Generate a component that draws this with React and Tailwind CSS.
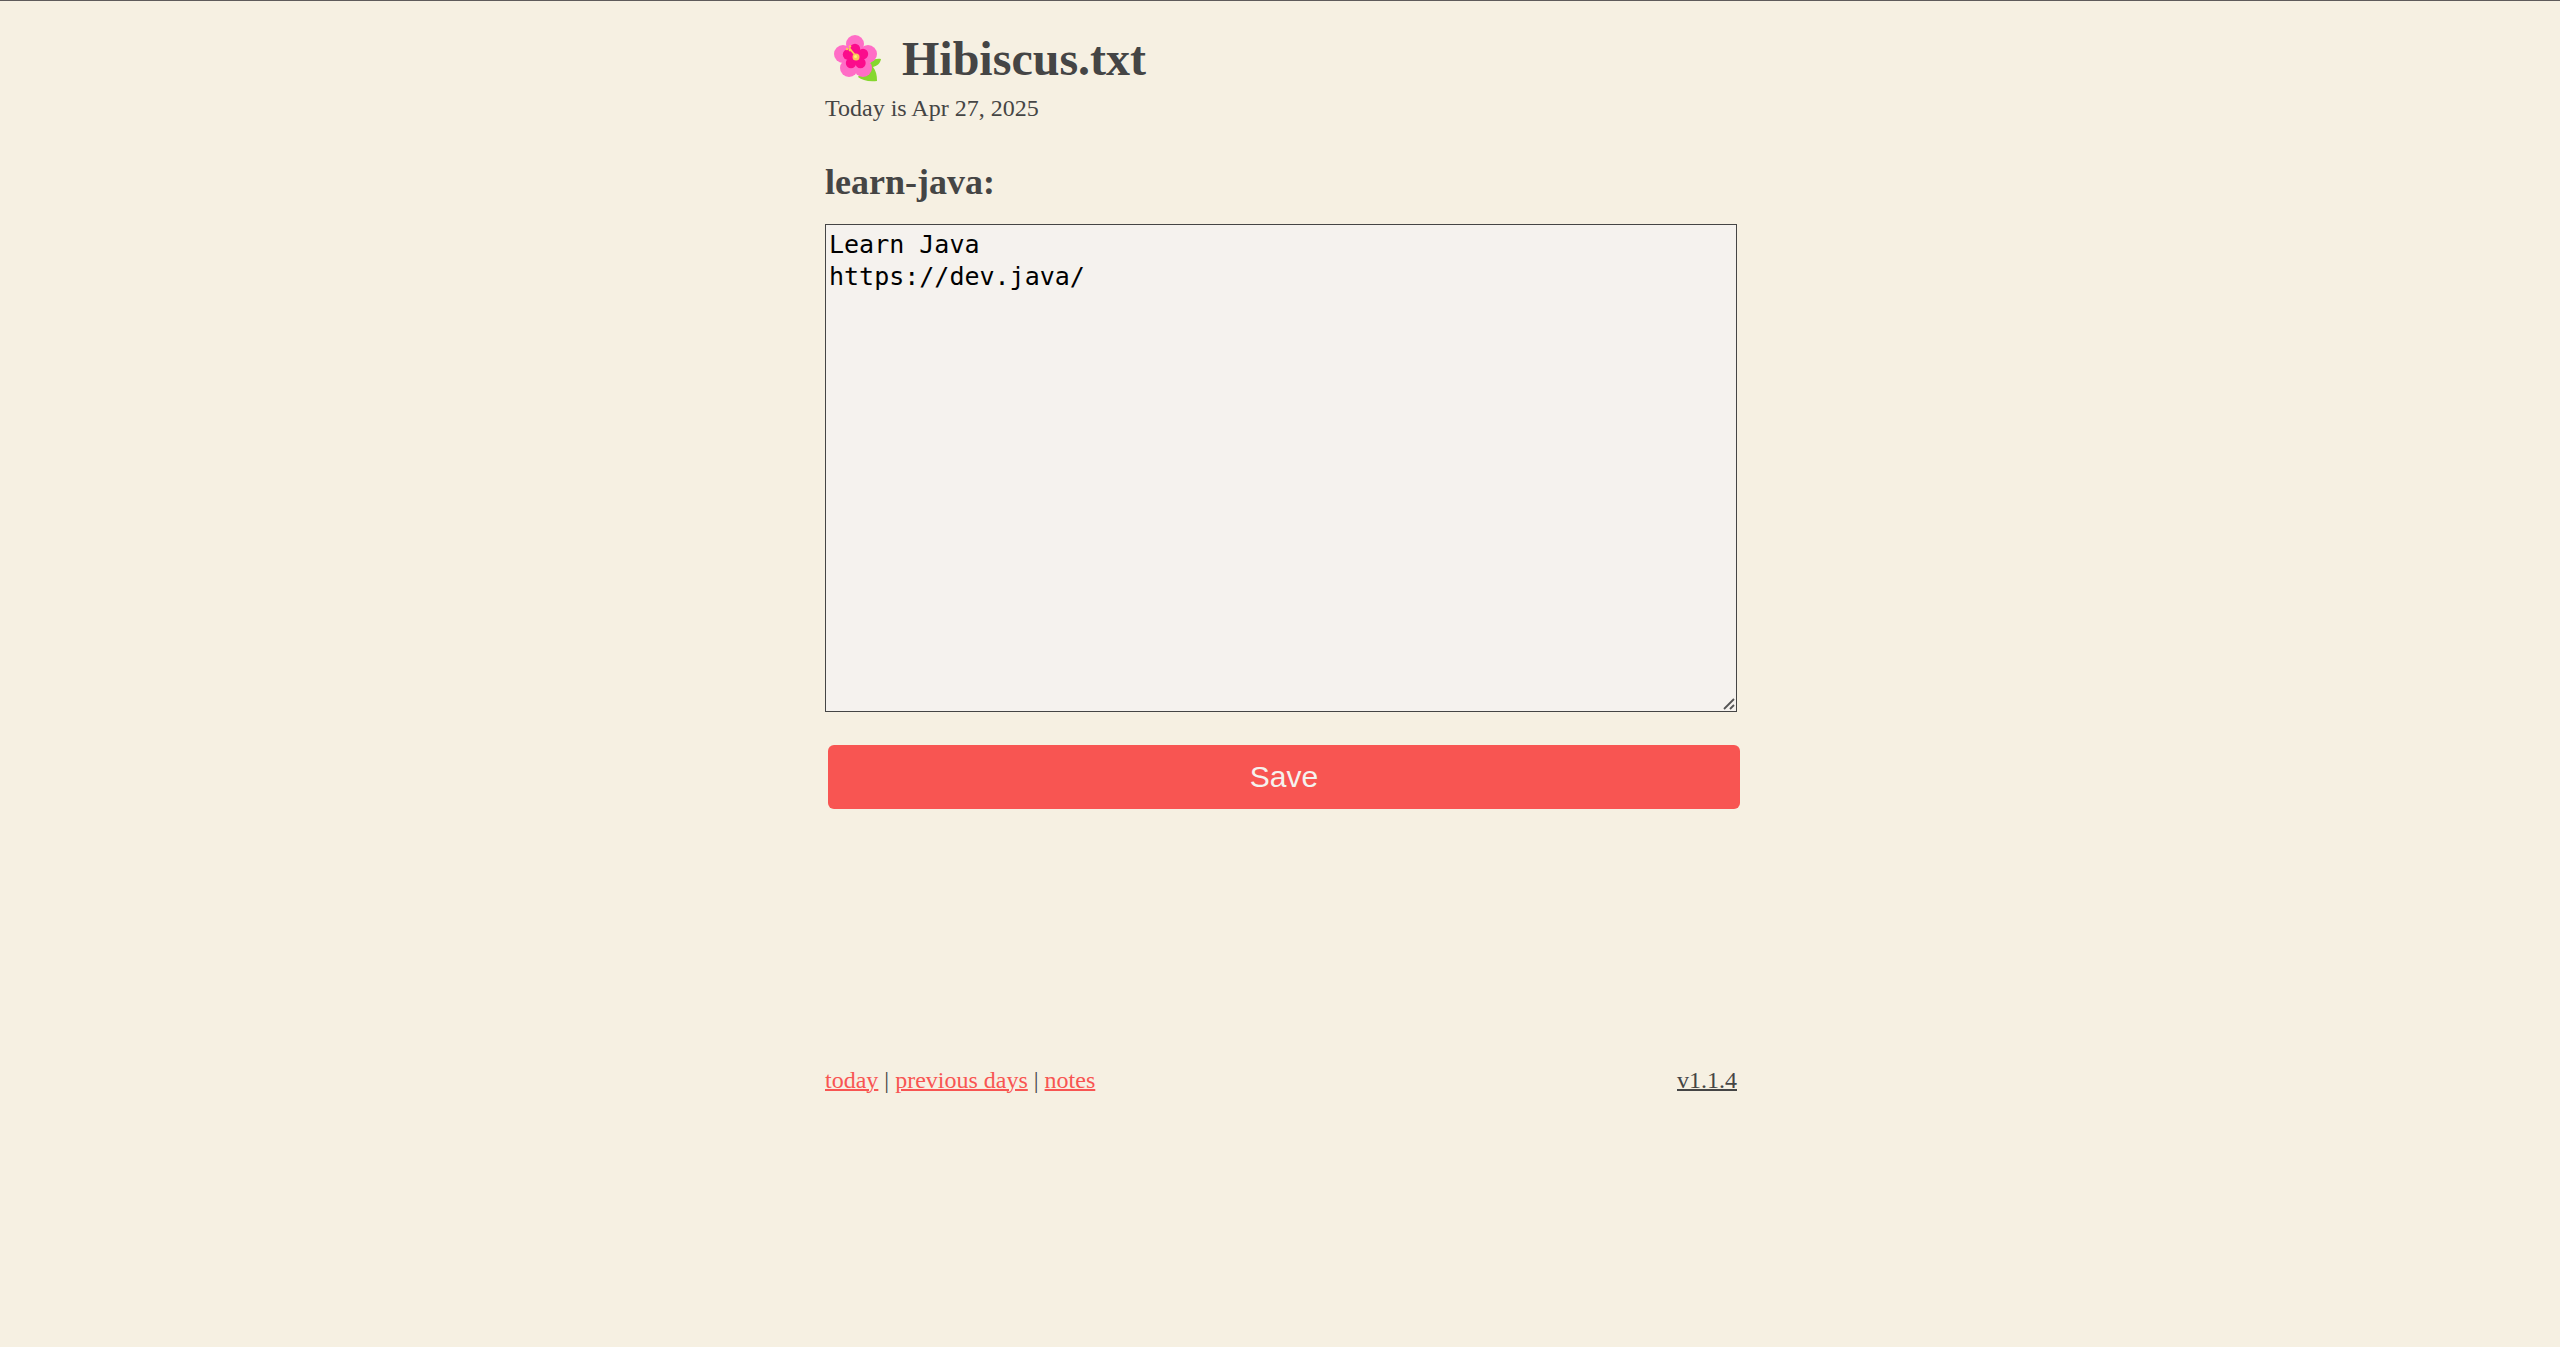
import { useState } from "react";

function Hibiscus() {
  return (
    <svg viewBox="0 0 48 48" className="h-12 w-12 shrink-0" aria-hidden="true">
      <path d="M24 42c4-6 7-9 11-11 1-5 5-8 12-7-1 5-4 7-8 8 3 4 4 8 4 14-9 1-15-1-19-4z" fill="#86d72f" />
      <g fill="#ff6dc6">
        <circle cx="21" cy="9" r="9" />
        <circle cx="9" cy="19" r="9" />
        <circle cx="34" cy="19" r="9" />
        <circle cx="15" cy="33" r="9" />
        <circle cx="29" cy="33" r="9" />
        <circle cx="21" cy="21" r="10" />
      </g>
      <g fill="#fb0b8c">
        <circle cx="21" cy="14" r="5.2" />
        <circle cx="14" cy="19.5" r="5.2" />
        <circle cx="29" cy="19" r="5.2" />
        <circle cx="17" cy="28" r="5.2" />
        <circle cx="26.5" cy="28" r="5.2" />
        <circle cx="21" cy="21" r="7" />
      </g>
      <path d="M21 20l-5-6" stroke="#fcc65a" strokeWidth="1.8" strokeLinecap="round" />
      <g fill="#fcc65a">
        <circle cx="16" cy="11.5" r="1.2" />
        <circle cx="13" cy="14" r="1.2" />
        <circle cx="16" cy="15" r="1.4" />
        <circle cx="22" cy="22" r="3.5" />
      </g>
      <circle cx="21.5" cy="21.5" r="1.5" fill="#fff478" />
    </svg>
  );
}

function ResizeGrip() {
  return (
    <svg viewBox="0 0 12 12" className="pointer-events-none absolute right-0.5 bottom-0.5 h-3 w-3" aria-hidden="true">
      <path d="M1 11L11 1M7 11l4-4" stroke="#555" strokeWidth="1.8" fill="none" />
    </svg>
  );
}

const links = ["today", "previous days", "notes"];

export default function App() {
  const [note, setNote] = useState("Learn Java\nhttps://dev.java/");

  return (
    <div className="min-h-screen border-t border-[#5f5b5b] bg-[#f6f0e2] pl-0.5 font-['Liberation_Serif',serif] text-2xl leading-7 text-[#454545]">
      <div className="mx-auto max-w-[912px] pt-7">
        <header>
          <h1 className="flex items-center gap-5 pl-[9px] text-[48px] leading-[60px] font-bold">
            <Hibiscus />
            Hibiscus.txt
          </h1>
          <p className="mt-[5px]">Today is Apr 27, 2025</p>
        </header>

        <main>
          <form onSubmit={(e) => e.preventDefault()}>
            <h2 className="mt-[39px] text-[36px] leading-[42px] font-bold">
              <label htmlFor="note">learn-java:</label>
            </h2>
            <div className="relative mt-[21px]">
              <textarea
                id="note"
                value={note}
                onChange={(e) => setNote(e.target.value)}
                spellCheck={false}
                className="block h-[488px] w-full resize-none border border-[#454545] bg-[#f5f2ee] px-[3px] py-1 font-['DejaVu_Sans_Mono',monospace] text-[25px] leading-8 text-black outline-none"
              />
              <ResizeGrip />
            </div>
            <button
              type="submit"
              className="mt-[33px] ml-[3px] block h-16 w-full rounded-md bg-[#f85552] font-['Liberation_Sans',sans-serif] text-[30px] text-[#f5f2ee]"
            >
              Save
            </button>
          </form>
        </main>

        <footer className="mt-[257px] flex justify-between">
          <nav>
            {links.map((link, i) => (
              <span key={link}>
                {i > 0 && " | "}
                <a href="#" className="text-[#f85552] underline decoration-2">
                  {link}
                </a>
              </span>
            ))}
          </nav>
          <a href="#" className="underline decoration-2">
            v1.1.4
          </a>
        </footer>
      </div>
    </div>
  );
}
